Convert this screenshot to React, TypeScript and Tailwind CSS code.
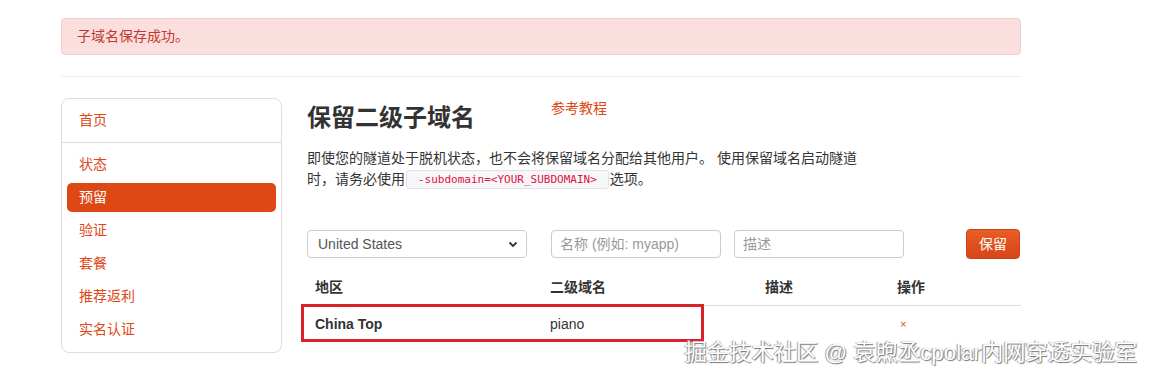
import React from "react";

const font = { fontFamily: '"Liberation Sans", "Noto Sans CJK SC", sans-serif' };

export default function App() {
  const nav = ["状态", "预留", "验证", "套餐", "推荐返利", "实名认证"];
  return (
    <div className="relative w-[1150px] h-[381px] bg-white overflow-hidden text-[14px] text-[#333]" style={font}>
      <div className="ml-[61px] w-[960px] pt-[18px]">
        <div className="h-[37px] flex items-center pl-[15px] bg-[#fbdede] border border-[#f3cccc] rounded-[4px] text-[#c0392b]">
          子域名保存成功。
        </div>
        <div className="mt-[21px] h-px bg-[#eeeeee]" />
        <div className="flex mt-[21px]">
          <div className="w-[221px] h-[255px] border border-[#dddddd] rounded-[8px] flex flex-col">
            <div className="h-[44px] flex items-center pl-[17px] border-b border-[#dddddd] text-[#dd4814]">首页</div>
            <div className="flex flex-col gap-[4px] px-[5px] pt-[7px]">
              {nav.map((n) => (
                <div
                  key={n}
                  className={
                    n === "预留"
                      ? "h-[29px] flex items-center pl-[12px] rounded-[5px] bg-[#dd4814] text-white"
                      : "h-[29px] flex items-center pl-[12px] text-[#dd4814]"
                  }
                >
                  {n}
                </div>
              ))}
            </div>
          </div>
          <div className="ml-[25px] w-[714px]">
            <div className="flex items-start">
              <h1 className="w-[244px] text-[24px] font-bold leading-[36px] mt-[2px] text-[#333]">保留二级子域名</h1>
              <a className="text-[#dd4814] leading-[20px]">参考教程</a>
            </div>
            <div className="w-[558px] mt-[12px] leading-[21px] text-[#333]">
              <div>即使您的隧道处于脱机状态，也不会将保留域名分配给其他用户。 使用保留域名启动隧道</div>
              <div className="flex items-center h-[21px]">
                <span>时，请务必使用</span>
                <code
                  className="mx-[1px] px-[11px] h-[19px] flex items-center bg-[#f7f7f9] border border-[#e1e1e8] rounded-[3px] text-[#dd1144] text-[11px]"
                  style={{ fontFamily: '"DejaVu Sans Mono", monospace' }}
                >
                  -subdomain=&lt;YOUR_SUBDOMAIN&gt;
                </code>
                <span>选项。</span>
              </div>
            </div>
            <div className="flex items-center mt-[39px] h-[30px]">
              <div className="w-[220px] h-[28px] border border-[#cccccc] rounded-[4px] flex items-center justify-between pl-[10px] pr-[8px] text-[#555]">
                <span>United States</span>
                <svg width="10" height="10" viewBox="0 0 10 10">
                  <path d="M1.5 3.5 L5 7 L8.5 3.5" fill="none" stroke="#333" strokeWidth="1.8" />
                </svg>
              </div>
              <div className="ml-[24px] w-[170px] h-[28px] border border-[#cccccc] rounded-[4px] flex items-center pl-[8px] text-[#999]">
                名称 (例如: myapp)
              </div>
              <div className="ml-[13px] w-[170px] h-[28px] border border-[#cccccc] rounded-[4px] flex items-center pl-[8px] text-[#999]">
                描述
              </div>
              <button className="ml-auto mr-[1px] w-[54px] h-[30px] rounded-[4px] text-white bg-gradient-to-b from-[#ea5d25] to-[#d6451a] border border-[#c9431a]">
                保留
              </button>
            </div>
            <div className="mt-[11px]">
              <div className="flex h-[36px] items-center font-bold border-b border-[#dddddd]">
                <div className="w-[235px] pl-[8px]">地区</div>
                <div className="w-[215px] pl-[8px]">二级域名</div>
                <div className="w-[132px] pl-[8px]">描述</div>
                <div className="w-[132px] pl-[8px]">操作</div>
              </div>
              <div className="relative flex h-[37px] items-center">
                <div className="w-[235px] pl-[8px] font-bold">China Top</div>
                <div className="w-[215px] pl-[8px]">piano</div>
                <div className="w-[132px] pl-[8px]"></div>
                <div className="w-[132px] pl-[11px] text-[#dd4814] text-[11px]">×</div>
                <div className="absolute left-[-6px] top-[-2px] w-[403px] h-[38px] border-[3px] border-[#d9232b]" />
              </div>
            </div>
          </div>
        </div>
      </div>
      <div
        className="absolute right-[13px] top-[339px] text-[22.3px] leading-[28px] text-white"
        style={{ textShadow: "1px 1px 1px #777, -1px 0 1px #999" }}
      >
        掘金技术社区 @ 袁煦丞cpolar内网穿透实验室
      </div>
    </div>
  );
}
